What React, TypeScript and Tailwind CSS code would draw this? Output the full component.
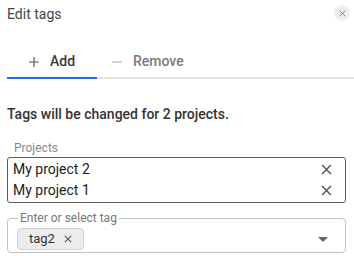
import { useState } from 'react'

function XIcon({ size = 10, className = '' }: { size?: number; className?: string }) {
  return (
    <svg width={size} height={size} viewBox="0 0 10 10" fill="none" stroke="currentColor" strokeWidth="1.3" className={className}>
      <path d="M1 1l8 8M9 1L1 9" />
    </svg>
  )
}

export default function App() {
  const [tab, setTab] = useState<'add' | 'remove'>('add')
  const projects = ['My project 2', 'My project 1']

  return (
    <div className="w-[354px] h-[256px] overflow-hidden bg-white font-['Roboto',sans-serif] text-[#222]">
      {/* header */}
      <div className="flex items-start justify-between pl-[7px] pr-[4px]">
        <span className="mt-[4px] text-[14px] leading-[20px] text-[#444]">Edit tags</span>
        <button className="mt-[5px] flex h-[16px] w-[16px] items-center justify-center rounded-full bg-[#efefef] text-[#777]">
          <XIcon size={7} />
        </button>
      </div>

      {/* tabs */}
      <div className="ml-[7px] mt-[22px] flex border-b-2 border-[#e3e3e3]">
        <button
          onClick={() => setTab('add')}
          className={`-mb-[2px] flex h-[33px] min-w-[90px] items-center justify-center gap-[11px] border-b-2 px-[15px] text-[14px] font-medium ${
            tab === 'add' ? 'border-[#1a73e8] text-[#3a3a3a]' : 'border-transparent text-[#777]'
          }`}
        >
          <svg width="10" height="10" viewBox="0 0 10 10" stroke="currentColor" strokeWidth="1.2" className={tab === 'add' ? 'text-[#555]' : 'text-[#aaa]'}>
            <path d="M5 0v10M0 5h10" />
          </svg>
          Add
        </button>
        <button
          onClick={() => setTab('remove')}
          className={`-mb-[2px] flex h-[33px] min-w-[90px] items-center justify-center gap-[11px] border-b-2 px-[15px] text-[14px] font-medium ${
            tab === 'remove' ? 'border-[#1a73e8] text-[#3a3a3a]' : 'border-transparent text-[#7a7a7a]'
          }`}
        >
          <svg width="10" height="10" viewBox="0 0 10 10" stroke="currentColor" strokeWidth="1.2" className="text-[#b5b5b5]">
            <path d="M0 5h10" />
          </svg>
          Remove
        </button>
      </div>

      <div className="mt-[25px] pl-[7px] text-[14px] font-medium leading-[20px] text-[#333]">
        Tags will be changed for 2 projects.
      </div>

      {/* projects */}
      <div className="ml-[7px] mt-[16px] w-[339px]">
        <div className="pl-[7px] text-[12px] leading-[17px] text-[#888]">Projects</div>
        <div className="rounded-[3px] border border-[#5c5c5c] py-[1px]">
          {projects.map((p) => (
            <div key={p} className="flex h-[21px] items-center justify-between pl-[5px] pr-[13px] text-[14px]">
              <span>{p}</span>
              <XIcon size={11} className="text-[#555]" />
            </div>
          ))}
        </div>

        {/* tag input */}
        <fieldset className="mt-[7px] rounded-[4px] border border-[#c4c4c4] px-[10px] pb-[2px]">
          <legend className="px-[2px] text-[12px] leading-[16px] text-[#777]">Enter or select tag</legend>
          <div className="flex items-center justify-between pt-[2px]">
            <div className="-ml-[1px] flex h-[22px] items-center gap-[9px] rounded-[4px] border border-[#d4d4d4] bg-[#ececec] pl-[11px] pr-[11px] text-[13px] text-[#333]">
              <span>tag2</span>
              <XIcon size={8} className="text-[#555]" />
            </div>
            <svg width="10" height="5" viewBox="0 0 10 5" className="mr-[7px] text-[#666]" fill="currentColor">
              <path d="M0 0h10L5 5z" />
            </svg>
          </div>
        </fieldset>
      </div>
    </div>
  )
}
